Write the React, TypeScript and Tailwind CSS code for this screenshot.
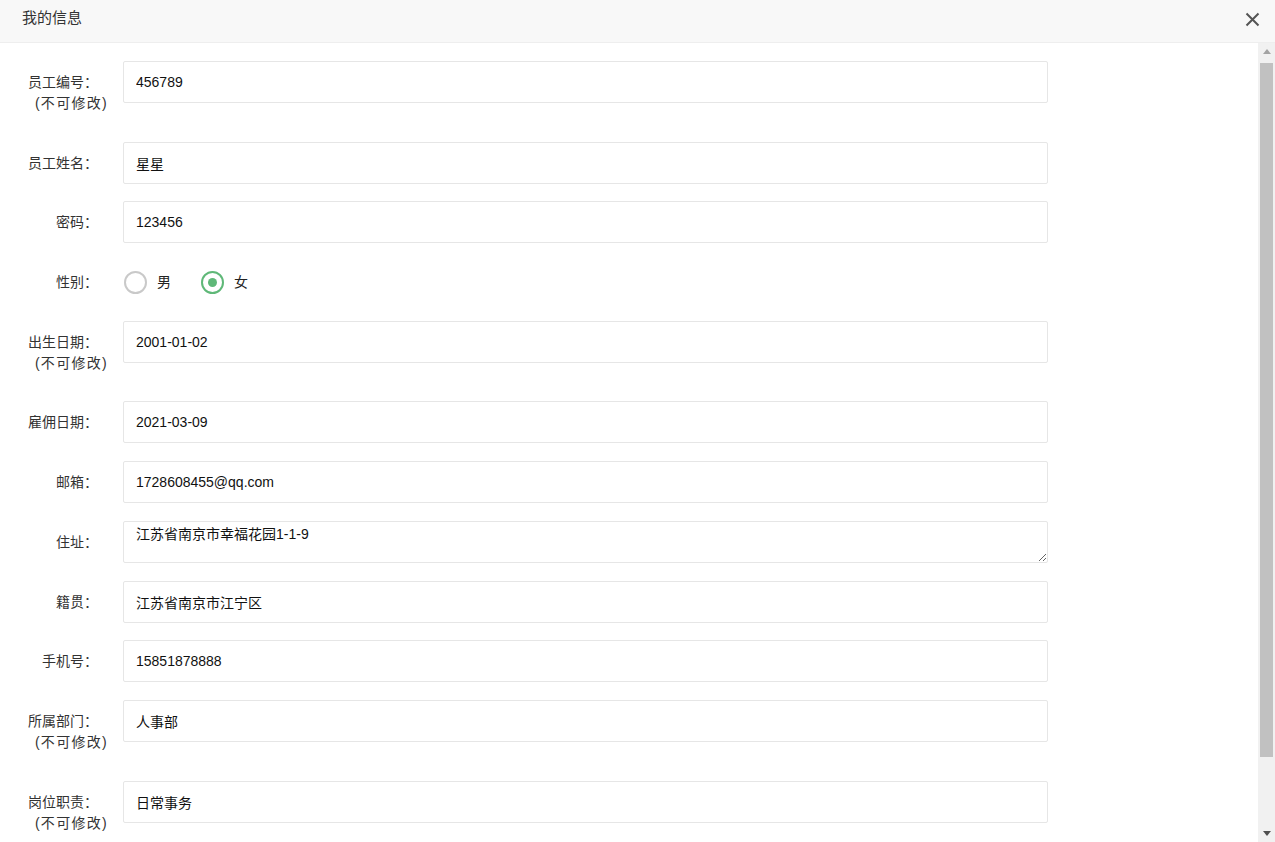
import { useState } from 'react'

type Field = {
  label: string
  value: string
  locked?: boolean
  kind?: 'input' | 'textarea' | 'radio'
}

const FIELDS: Field[] = [
  { label: '员工编号：', value: '456789', locked: true },
  { label: '员工姓名：', value: '星星' },
  { label: '密码：', value: '123456' },
  { label: '性别：', value: '女', kind: 'radio' },
  { label: '出生日期：', value: '2001-01-02', locked: true },
  { label: '雇佣日期：', value: '2021-03-09' },
  { label: '邮箱：', value: '1728608455@qq.com' },
  { label: '住址：', value: '江苏省南京市幸福花园1-1-9', kind: 'textarea' },
  { label: '籍贯：', value: '江苏省南京市江宁区' },
  { label: '手机号：', value: '15851878888' },
  { label: '所属部门：', value: '人事部', locked: true },
  { label: '岗位职责：', value: '日常事务', locked: true },
]

const FONT = "font-['Liberation_Sans','Noto_Sans_CJK_SC',sans-serif]"

function Radio({ checked, label, onClick }: { checked: boolean; label: string; onClick: () => void }) {
  return (
    <button type="button" onClick={onClick} className="mr-[30px] flex items-center">
      <span
        className={
          checked
            ? 'flex h-[23px] w-[23px] items-center justify-center rounded-full border-2 border-[#5fb878]'
            : 'flex h-[23px] w-[23px] items-center justify-center rounded-full border-2 border-[#c9c9c9]'
        }
      >
        {checked && <span className="h-[9px] w-[9px] rounded-full bg-[#5fb878]" />}
      </span>
      <span className="ml-[10px] text-[14px] text-[#222]">{label}</span>
    </button>
  )
}

function Row({ field }: { field: Field }) {
  const [sex, setSex] = useState(field.value)

  return (
    <div className={field.locked ? 'mb-[17.7px] flex min-h-[63px]' : 'mb-[17.7px] flex'}>
      <label className="w-[98px] shrink-0 pt-[11px] text-right text-[14px] leading-[21px] text-[#333]">
        <span className="block whitespace-nowrap">{field.label}</span>
        {field.locked && (
          <span className="mr-[-10px] block whitespace-nowrap tracking-[1.3px]">(不可修改)</span>
        )}
      </label>

      <div className="ml-[25px] pl-[1px]">
        {field.kind === 'radio' && (
          <div className="flex h-[42px] items-center">
            <Radio checked={sex === '男'} label="男" onClick={() => setSex('男')} />
            <Radio checked={sex === '女'} label="女" onClick={() => setSex('女')} />
          </div>
        )}
        {field.kind === 'textarea' && (
          <textarea
            defaultValue={field.value}
            className="-ml-[1px] block h-[42px] min-h-[30px] w-[925px] rounded-[2px] border border-[#e6e6e6] px-[12px] pt-[2px] text-[14px] leading-[20px] text-[#111] outline-none"
          />
        )}
        {!field.kind && (
          <input
            defaultValue={field.value}
            readOnly={field.locked}
            className="-ml-[1px] block h-[42px] w-[925px] rounded-[2px] border border-[#e6e6e6] px-[12px] text-[14px] text-[#111] outline-none"
          />
        )}
      </div>
    </div>
  )
}

function Scrollbar() {
  return (
    <div className="flex w-[17px] shrink-0 flex-col bg-[#f1f1f1]">
      <div className="flex h-[17px] items-center justify-center">
        <svg width="8" height="5" viewBox="0 0 8 5" fill="#a3a3a3">
          <path d="M0 5 L4 0 L8 5 Z" />
        </svg>
      </div>
      <div className="flex-1 px-[2px] pt-[3px] pb-[68px]">
        <div className="h-[694px] bg-[#c1c1c1]" />
      </div>
      <div className="flex h-[17px] items-center justify-center">
        <svg width="8" height="5" viewBox="0 0 8 5" fill="#505050">
          <path d="M0 0 L8 0 L4 5 Z" />
        </svg>
      </div>
    </div>
  )
}

export default function App() {
  return (
    <div className={`flex h-[842px] w-[1275px] flex-col overflow-hidden bg-white ${FONT}`}>
      <header className="flex h-[43px] shrink-0 items-start justify-between border-b border-[#eeeeee] bg-[#f8f8f8]">
        <h1 className="pl-[22px] text-[15px] leading-[35px] text-[#333]">我的信息</h1>
        <button type="button" className="mr-[15px] mt-[12px] text-[#555]" aria-label="关闭">
          <svg width="15" height="15" viewBox="0 0 15 15" fill="none" stroke="currentColor" strokeWidth="2">
            <path d="M1.5 1.5 L13.5 13.5 M13.5 1.5 L1.5 13.5" />
          </svg>
        </button>
      </header>

      <div className="flex min-h-0 flex-1">
        <main className="min-w-0 flex-1 overflow-hidden pt-[18px] pb-[30px]">
          {FIELDS.map((field) => (
            <Row key={field.label} field={field} />
          ))}
        </main>
        <Scrollbar />
      </div>
    </div>
  )
}
